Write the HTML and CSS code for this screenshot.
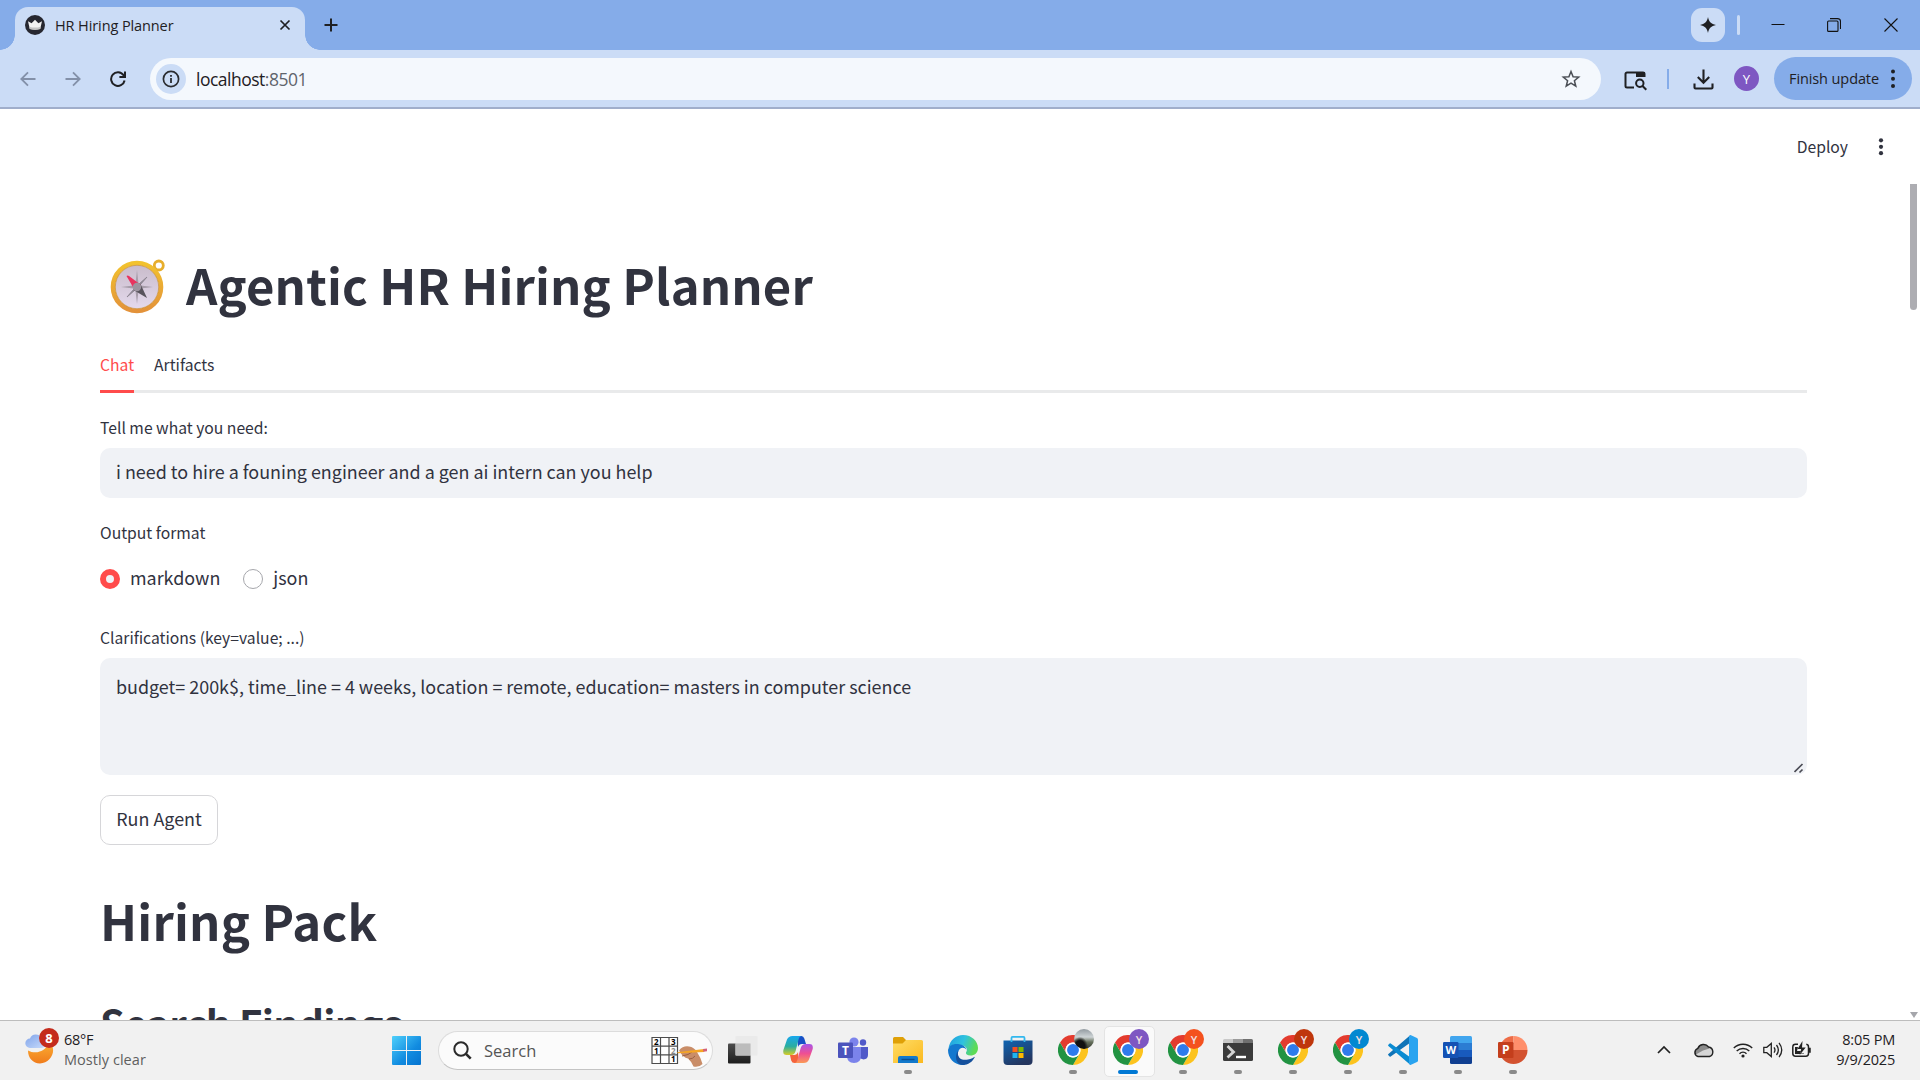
FILE: index.html
```html
<!DOCTYPE html>
<html lang="en">
<head>
<meta charset="utf-8">
<title>HR Hiring Planner</title>
<link rel="stylesheet" href="styles.css">
</head>
<body>
<svg class="defs" width="0" height="0">
  <defs>
    <symbol id="chrome" viewBox="0 0 48 48">
      <circle cx="24" cy="24" r="24" fill="#fff"/>
      <path fill="#e33b2e" d="M3.2 12A24 24 0 0 1 44.8 12H24A12 12 0 0 0 13.6 30Z"/>
      <path fill="#fcc31e" d="M44.8 12A24 24 0 0 1 24 48L34.4 30A12 12 0 0 0 24 12Z"/>
      <path fill="#229342" d="M24 48A24 24 0 0 1 3.2 12L13.6 30A12 12 0 0 0 34.4 30Z"/>
      <circle cx="24" cy="24" r="12" fill="#fff"/>
      <circle cx="24" cy="24" r="9.5" fill="#2f7bed"/>
    </symbol>
  </defs>
</svg>

<header class="browser">
  <div class="tabstrip">
    <div class="tab">
      <svg class="favicon" viewBox="0 0 20 20"><circle cx="10" cy="10" r="10" fill="#262730"/><path d="M3 6.200L6.600 8.300 10 4.700l3.400 3.600L17 6.200 15.200 14Q10 15.500 4.800 14Z" fill="#f2f2f2"/><path d="M4.300 11.700Q10 13.500 15.700 11.700L15.200 14Q10 15.500 4.800 14Z" fill="#c4c4c4"/></svg>
      <span class="tab-title">HR Hiring Planner</span>
      <svg class="tab-close" viewBox="0 0 12 12"><path d="M1.500 1.500l9 9M10.500 1.500l-9 9" stroke="#1f2023" stroke-width="1.700"/></svg>
    </div>
    <svg class="new-tab" viewBox="0 0 14 14"><path d="M7 .5v13M.5 7h13" stroke="#1f2023" stroke-width="2"/></svg>
    <div class="window-controls">
      <span class="sparkle"><svg width="16" height="16" viewBox="0 0 16 16"><path d="M8 0C9 4.800 11.200 7 16 8 11.200 9 9 11.200 8 16 7 11.200 4.800 9 0 8 4.800 7 7 4.800 8 0Z" fill="#1f2023"/></svg></span>
      <span class="strip-divider"></span>
      <svg class="win-min" width="14" height="14" viewBox="0 0 14 14"><path d="M.5 7.500h13" stroke="#111"/></svg>
      <svg class="win-max" width="14" height="14" viewBox="0 0 14 14" fill="none" stroke="#111" stroke-width="1.100"><rect x=".6" y="3" width="10.400" height="10.400" rx="1"/><path d="M3 .6h7.500a3 3 0 0 1 3 3v7.400"/></svg>
      <svg class="win-close" width="14" height="14" viewBox="0 0 14 14"><path d="M.5 .5l13 13M13.500 .5l-13 13" stroke="#111" stroke-width="1.100"/></svg>
    </div>
  </div>
  <div class="toolbar">
    <svg class="back" width="16" height="16" viewBox="0 0 16 16" fill="none" stroke="#8390a8" stroke-width="1.800"><path d="M15.500 8H1.500M8 1.300L1.300 8 8 14.700"/></svg>
    <svg class="forward" width="16" height="16" viewBox="0 0 16 16" fill="none" stroke="#8390a8" stroke-width="1.800"><path d="M.5 8h14M8 1.300L14.700 8 8 14.700"/></svg>
    <svg class="reload" width="16" height="16" viewBox="0 0 16 16" fill="none" stroke="#1f2023" stroke-width="2"><path d="M14.600 9.500A6.800 6.800 0 1 1 13.500 4.200L14.700 5.500"/><path d="M15 .5v5.600H9.400"/></svg>
    <div class="omnibox">
      <span class="site-info"><svg width="18" height="18" viewBox="0 0 18 18"><circle cx="9" cy="9" r="7.600" fill="none" stroke="#2a2c30" stroke-width="1.700"/><path d="M9 8v5M9 5v1.700" stroke="#2a2c30" stroke-width="1.800"/></svg></span>
      <span class="url">localhost<span class="port">:8501</span></span>
      <svg class="star" width="20" height="20" viewBox="0 0 20 20" fill="none" stroke="#4b4f56" stroke-width="1.500"><path d="M10 2.500l2.100 5.200 5.600.4-4.300 3.600 1.400 5.500L10 14.200l-4.800 3 1.400-5.500L2.300 8.100l5.600-.4Z"/></svg>
    </div>
    <svg class="lens" width="23" height="21" viewBox="0 0 23 21" fill="none" stroke="#1f2023" stroke-width="2"><path d="M10 17.500H3a1.500 1.500 0 0 1-1.500-1.500V4A1.500 1.500 0 0 1 3 2.500h16A1.500 1.500 0 0 1 20.500 4v3"/><path d="M12 2h9v5h-9z" fill="#1f2023" stroke="none"/><circle cx="15.800" cy="13.200" r="3.700"/><path d="M18.300 15.700l4 4"/></svg>
    <span class="tool-divider"></span>
    <svg class="download" width="21" height="21" viewBox="0 0 21 21" fill="none" stroke="#1f2023" stroke-width="2.100"><path d="M10.500 .5v13M4.800 8l5.700 5.700L16.200 8M1.500 14.500v4q0 1 1 1h16q1 0 1-1v-4"/></svg>
    <span class="profile">Y</span>
    <div class="update">Finish update
      <svg width="6" height="20" viewBox="0 0 6 20" fill="#1f2023"><circle cx="3" cy="2.500" r="2"/><circle cx="3" cy="9.700" r="2"/><circle cx="3" cy="16.900" r="2"/></svg>
    </div>
  </div>
</header>

<main class="page">
  <div class="app-header">
    <span>Deploy</span>
    <svg width="6" height="20" viewBox="0 0 6 20" fill="#31333f"><circle cx="3" cy="3.300" r="2.100"/><circle cx="3" cy="9.800" r="2.100"/><circle cx="3" cy="16.200" r="2.100"/></svg>
  </div>
  <section class="content">
    <h1 class="title">
      <svg class="compass" width="56" height="56" viewBox="0 0 56 56">
        <defs>
          <linearGradient id="gold" x1="0" y1="0" x2="0" y2="1"><stop offset="0" stop-color="#f2c22e"/><stop offset="1" stop-color="#e3923a"/></linearGradient>
          <linearGradient id="dial" x1="0" y1="0" x2="0" y2="1"><stop offset="0" stop-color="#c9bccb"/><stop offset="1" stop-color="#e4d9ec"/></linearGradient>
        </defs>
        <circle cx="48.800" cy="6.500" r="4.500" fill="none" stroke="#e7ae2c" stroke-width="2.800"/>
        <circle cx="27" cy="28" r="24" fill="none" stroke="url(#gold)" stroke-width="4.600"/>
        <circle cx="27" cy="28" r="21.700" fill="url(#dial)" stroke="#c78a2d" stroke-width=".7"/>
        <path d="M27 11l1.700 15.300L43 28l-14.300 1.700L27 45l-1.700-15.300L11 28l14.300-1.700Z" fill="#a79daa"/>
        <path d="M37 18l-8 7 1 1ZM17 38l8-7-1-1Z" fill="#8f8894" stroke="#8f8894"/>
        <path d="M16.500 17Q17.500 16 19 17L31 26 25 31.500Z" fill="#e8345f"/>
        <path d="M37 39L23.500 31 30.500 25Z" fill="#58535c"/>
        <circle cx="27" cy="28" r="4.200" fill="#9c949f"/>
      </svg>
      <span>Agentic HR Hiring Planner</span>
    </h1>
    <nav class="tabs"><span class="active">Chat</span><span>Artifacts</span></nav>
    <label class="label first">Tell me what you need:</label>
    <div class="input">i need to hire a founing engineer and a gen ai intern can you help</div>
    <label class="label format">Output format</label>
    <div class="radios">
      <span class="radio on"></span><span class="option">markdown</span>
      <span class="radio"></span><span class="option">json</span>
    </div>
    <label class="label clar">Clarifications (key=value; ...)</label>
    <div class="textarea">
      <span>budget= 200k$, time_line = 4 weeks, location = remote, education= masters in computer science</span>
      <svg width="11" height="11" viewBox="0 0 11 11" stroke="#4b4c55" stroke-width="1.700"><path d="M.5 9L8.500 1M5.500 9.500l3-3"/></svg>
    </div>
    <button class="run">Run Agent</button>
    <h1 class="pack">Hiring Pack</h1>
    <h2 class="findings">Search Findings</h2>
  </section>
  <div class="scrollbar"><span class="thumb"></span><span class="down"></span></div>
</main>

<footer class="taskbar">
  <div class="weather">
    <div class="weather-icon">
      <svg width="32" height="36" viewBox="0 0 32 36">
        <defs><linearGradient id="moon" x1="0" y1="0" x2="0" y2="1"><stop offset="0" stop-color="#fbb034"/><stop offset="1" stop-color="#f07c1c"/></linearGradient>
        <linearGradient id="cloud" x1="0" y1="0" x2="1" y2="1"><stop offset="0" stop-color="#7fa3ea"/><stop offset="1" stop-color="#c9dcfb"/></linearGradient></defs>
        <path d="M3 20.500C11 25 22 21 24 11.500c9 8 2 22-9 22C8 33.500 3 28 3 20.500Z" fill="url(#moon)"/>
        <path d="M5 18a4.700 4.700 0 0 1 0-9.400 6.300 6.300 0 0 1 11.500-.5 5 5 0 0 1 0 9.900Z" fill="url(#cloud)"/>
      </svg>
      <b class="count">8</b>
    </div>
    <div class="weather-text"><span>68°F</span><span class="muted">Mostly clear</span></div>
  </div>

  <div class="start">
    <svg width="29" height="29" viewBox="0 0 29 29"><defs><linearGradient id="win" x1="0" y1="0" x2="1" y2="1"><stop offset="0" stop-color="#4fd0fb"/><stop offset=".6" stop-color="#118be0"/><stop offset="1" stop-color="#0673cf"/></linearGradient></defs><path d="M1 0h13v14H0V1q0-1 1-1ZM15 0h13q1 0 1 1v13H15ZM0 15h14v14H1q-1 0-1-1ZM15 15h14v13q0 1-1 1H15Z" fill="url(#win)"/></svg>
  </div>
  <div class="search">
    <svg width="19" height="19" viewBox="0 0 19 19" fill="none" stroke="#2a2a2a"><circle cx="8" cy="8" r="6.700" stroke-width="2"/><path d="M12.700 12.700l5 5" stroke-width="2.600"/></svg>
    <span class="search-text">Search</span>
    <svg class="sudoku" width="58" height="32" viewBox="0 0 58 32">
      <path d="M1 2.500h25.500v26H1ZM9.500 2.500v26M18 2.500v26M1 11.200h25.500M1 19.800h25.500" fill="#fff" stroke="#4c4c4c" stroke-width="1.200"/>
      <g class="digits"><text x="3" y="9.700">2</text><text x="20" y="9.700">3</text><text x="3" y="18.500">1</text><text x="20" y="18.500" fill="#888">2</text><text x="20" y="27">1</text></g>
      <path d="M28 15.500Q32 10.500 38 11.500q5 .5 8 5.500 4 6 5.500 12-3 3.500-9 2.500-2-5-5.500-8-5-1-9-8Z" fill="#c98d68"/>
      <path d="M31 21q7-1 10-4M38 24q4 0 6-3" stroke="#9b6041" stroke-width="1" fill="none"/>
      <path d="M26 17.200l27-3.200.3 3L27 18.200Z" fill="#f6a623"/><path d="M52 14.100l4-.5v2.700l-3.700.4Z" fill="#d2617c"/>
    </svg>
  </div>

  <div class="apps">
    <div class="app"><svg width="30" height="30" viewBox="0 0 30 30"><defs><linearGradient id="tv" x1="0" y1="0" x2="0" y2="1"><stop offset="0" stop-color="#4d4d4d"/><stop offset="1" stop-color="#1d1d1d"/></linearGradient></defs><rect y="8.500" width="22.500" height="20" rx="1" fill="url(#tv)"/><rect x="7.500" y="1" width="22" height="19.500" rx="1" fill="#e9e9e9" fill-opacity=".93"/><rect x="7.500" y="8.500" width="15" height="12" fill="#bcbcbc"/></svg></div>
    <div class="app"><svg width="30" height="30" viewBox="0 0 30 30">
      <defs><linearGradient id="cpA" x1="0" y1="0" x2="0" y2="1"><stop offset="0" stop-color="#17a7ee"/><stop offset=".55" stop-color="#2aaea0"/><stop offset="1" stop-color="#d9cc25"/></linearGradient>
      <linearGradient id="cpB" x1="0" y1="0" x2="0" y2="1"><stop offset="0" stop-color="#a955e8"/><stop offset=".5" stop-color="#ef4f93"/><stop offset="1" stop-color="#fb9a55"/></linearGradient></defs>
      <path d="M14 1h4.500q2 0 2.800 2.500L23 9h-4q-3 0-4 3Z" fill="#1750c6"/>
      <path d="M16 28h-4.500q-2.500 0-3.300-2.500L7 20h4q3 0 4-3Z" fill="#f4633c"/>
      <path d="M9.500 1h9q-2 0-2.700 2.500L12.600 16q-1 4-4.600 4H3.500Q-.5 20 .4 15L4 4.500Q5.500 1 9.500 1Z" fill="url(#cpA)"/>
      <path d="M20.500 28h-9q2 0 2.700-2.500L17.400 14q1-4.500 4.600-5h4.500q4 0 3.200 5L26 24.500Q24.500 28 20.500 28Z" fill="url(#cpB)"/></svg></div>
    <div class="app"><svg width="30" height="30" viewBox="0 0 30 30"><circle cx="16" cy="7" r="4.600" fill="#7b83eb"/><circle cx="25" cy="7.500" r="3.200" fill="#5059c9"/><path d="M21 12h9v8q0 4-4.500 4.500L21 23Z" fill="#5059c9"/><path d="M9 12h14v9q0 7-7 7T9 21Z" fill="#7b83eb"/><rect x="0" y="7.500" width="15" height="15.500" rx="1" fill="#4b53bc"/><text class="glyph" x="7.500" y="19.500" fill="#fff" font-size="12">T</text></svg></div>
    <div class="app"><svg width="30" height="30" viewBox="0 0 30 30"><defs><linearGradient id="fold" x1="0" y1="0" x2="1" y2="1"><stop offset="0" stop-color="#ffdd66"/><stop offset="1" stop-color="#fbb91f"/></linearGradient></defs><path d="M0 3.500Q0 2 1.500 2H10l3 3h15v6H0Z" fill="#dfa007"/><path d="M0 8.500h9.500L13 5h15.500Q30 5 30 6.500V28H0Z" fill="url(#fold)"/><path d="M5 28v-5q0-2 2-2h16q2 0 2 2v5Z" fill="#1279cc"/><path d="M8.500 24.500h13" stroke="#0b4f91" stroke-width="1.400"/></svg><i></i></div>
    <div class="app"><svg width="30" height="30" viewBox="0 0 30 30"><defs><linearGradient id="ed" x1="0" y1="0" x2="1" y2=".3"><stop offset="0" stop-color="#1f9de0"/><stop offset=".55" stop-color="#2fc2df"/><stop offset="1" stop-color="#5ddb56"/></linearGradient></defs><path d="M.5 13C2 5 8 0 15 0c9 0 15 6.500 15 13 0 5-3.500 7.500-7.500 7.500-3.500 0-5-1.500-4.500-3 2.500-4-.5-6.500-5-7.500C8 9 2.500 10 .5 13Z" fill="url(#ed)"/><path d="M0 15C1 10.500 5 8.500 10 9c5 .5 8 3 8.500 6-2-3.500-7-3-8.500 2-1 5 3 9.500 7.500 13-9 1-17.500-5-17.500-15Z" fill="#1378cf"/><path d="M10.500 15.500C8 22 13 26 20 24.500c3-.5 6-2.300 7-2.800C24 28 18 31 12 29.500 7 27 7 19 10.500 15.500Z" fill="#15509c"/></svg></div>
    <div class="app"><svg width="30" height="30" viewBox="0 0 30 30"><defs><linearGradient id="st" x1="0" y1="0" x2=".5" y2="1"><stop offset="0" stop-color="#0f64b2"/><stop offset="1" stop-color="#24365f"/></linearGradient></defs><path d="M.5 5.500h29V26q0 4-4 4h-21q-4 0-4-4Z" fill="url(#st)"/><path d="M8.500 7V2.900q0-1 1-1h11q1 0 1 1V7" fill="none" stroke="#32b8ee" stroke-width="1.800"/><path d="M9.500 12h5v5h-5z" fill="#f25022"/><path d="M15.500 12h5v5h-5z" fill="#7fba00"/><path d="M9.500 18h5v5h-5z" fill="#1eb4f0"/><path d="M15.500 18h5v5h-5z" fill="#ffb900"/></svg></div>
    <div class="app"><svg width="30" height="30"><use href="#chrome"/></svg><b class="user photo"></b><i></i></div>
    <div class="app current"><svg width="30" height="30"><use href="#chrome"/></svg><b class="user purple">Y</b><i></i></div>
    <div class="app"><svg width="30" height="30"><use href="#chrome"/></svg><b class="user orange">Y</b><i></i></div>
    <div class="app"><svg width="30" height="30" viewBox="0 0 30 30"><path d="M0 8h30v16.500q0 1.500-1.500 1.500h-27Q0 26 0 24.500Z" fill="#3b3b3b"/><path d="M0 5.500Q0 4 1.500 4H10v4H0Z" fill="#c9c9c9"/><path d="M10 4h10v4H10Z" fill="#9b9b9b"/><path d="M20 4h8.500Q30 4 30 5.500V8H20Z" fill="#707070"/><path d="M4.500 11l6 6-6 5.500" stroke="#d5d5d5" stroke-width="2.800" fill="none"/><path d="M13 22h10" stroke="#fff" stroke-width="2.400"/></svg><i></i></div>
    <div class="app"><svg width="30" height="30"><use href="#chrome"/></svg><b class="user rust">Y</b><i></i></div>
    <div class="app"><svg width="30" height="30"><use href="#chrome"/></svg><b class="user blue">Y</b><i></i></div>
    <div class="app"><svg width="30" height="30" viewBox="0 0 30 30"><path d="M2.700 21.500L22.500 7.500V0L.4 19q-.7.700 0 1.300l1.200 1.100q.5.500 1.100.1Z" fill="#0f74b8"/><path d="M2.700 8.500L22.500 22.500V30L.4 11q-.7-.7 0-1.300l1.200-1.100q.5-.5 1.100-.1Z" fill="#0a8bd2"/><path d="M22.500 0L29 3q1 .5 1 1.500v21q0 1-1 1.500l-6.500 3q-1.500-.5-1.500-2V2q0-1.500 1.500-2Z" fill="#2aa4f0"/></svg><i></i></div>
    <div class="app"><svg width="30" height="30" viewBox="0 0 30 30"><path d="M7 2.500Q7 1 8.500 1h19Q29 1 29 2.500V8H7Z" fill="#41a5ee"/><path d="M7 8h22v7H7Z" fill="#2b7cd3"/><path d="M7 15h22v7H7Z" fill="#185abd"/><path d="M7 22h22v5.500q0 1.500-1.500 1.500h-19Q7 29 7 27.500Z" fill="#103f91"/><rect y="7" width="15.500" height="16" rx="1.200" fill="#1452b4"/><text class="glyph" x="7.700" y="19" fill="#fff" font-size="11">W</text></svg><i></i></div>
    <div class="app"><svg width="30" height="30" viewBox="0 0 30 30"><path d="M15.500 1A14 14 0 0 0 1.500 15h14Z" fill="#ed6c47"/><path d="M15.500 1a14 14 0 0 1 14 14h-14Z" fill="#ff8f6b"/><path d="M1.500 15a14 14 0 0 0 28 0Z" fill="#d35230"/><rect y="7" width="15.500" height="16" rx="1.200" fill="#c43e1c"/><text class="glyph" x="7.700" y="19" fill="#fff" font-size="12">P</text></svg><i></i></div>
  </div>

  <div class="tray">
    <svg width="14" height="9" viewBox="0 0 14 9" fill="none" stroke="#222" stroke-width="1.700"><path d="M1 8l6-6 6 6"/></svg>
    <svg class="onedrive" width="21" height="16" viewBox="0 0 21 16"><path d="M5 14.500a4.300 4.300 0 0 1 0-8.200A6 6 0 0 1 15.500 5a4.900 4.900 0 0 1 1 9.500Z" fill="#d5d5d5"/><path d="M4 7a6 6 0 0 1 11-2l1.500 1.500L10 8.500 2 13Q0 9 4 7Z" fill="#8b8b8b"/><path d="M5 14.500a4.300 4.300 0 0 1 0-8.200A6 6 0 0 1 15.500 5a4.900 4.900 0 0 1 1 9.500Z" fill="none" stroke="#222" stroke-width="1.400"/></svg>
    <svg class="wifi" width="20" height="16" viewBox="0 0 20 16" fill="none" stroke="#222" stroke-width="1.400"><path d="M.8 6a13 13 0 0 1 18.400 0M3.700 9a9 9 0 0 1 12.600 0M6.500 11.700a5 5 0 0 1 7 0"/><circle cx="10" cy="14" r="1.600" fill="#222" stroke="none"/></svg>
    <svg class="sound" width="20" height="18" viewBox="0 0 20 18" fill="none" stroke="#222" stroke-width="1.300"><path d="M.8 6.300h3L8.300 2.500v13L3.800 11.700h-3ZM11 6.300q2 2.700 0 5.400M13.500 4q3.700 5 0 10M16 1.800q5.500 7.200 0 14.400"/></svg>
    <svg class="battery" width="20" height="17" viewBox="0 0 20 17"><path d="M6 3.200H3.500A2.700 2.700 0 0 0 .8 5.900v6.700a2.700 2.700 0 0 0 2.700 2.700h10.300a2.700 2.700 0 0 0 2.700-2.700V5.900a2.700 2.700 0 0 0-2.200-2.600M18 6.800v5" fill="none" stroke="#222" stroke-width="1.500"/><path d="M3 6h3l-1 4h4l-1 2.500h4V13H3Z" fill="#222"/><path d="M10.500 0L5.500 8h3.700l-1.500 6 6-7.500H10Z" fill="#222"/></svg>
    <div class="clock"><span>8:05 PM</span><span>9/9/2025</span></div>
  </div>
</footer>
</body>
</html>
```
FILE: styles.css
```css
* { box-sizing: border-box; }
body {
  margin: 0;
  width: 1920px;
  height: 1080px;
  overflow: hidden;
  display: flex;
  flex-direction: column;
  background: #fff;
  font-family: "Open Sans", "Noto Sans", sans-serif;
  color: #1f2023;
}
svg { display: block; flex: none; }
.defs { position: absolute; }

/* Browser chrome */
.browser { flex: none; height: 109px; background: #cbdcf6; border-bottom: 2px solid #a0aecb; }
.tabstrip { display: flex; height: 50px; background: #85ace9; }
.tab {
  position: relative;
  display: flex;
  align-items: center;
  width: 290px;
  height: 43px;
  margin: 7px 0 0 15px;
  padding: 0 14px 7px 10px;
  border-radius: 13px 13px 0 0;
  background: #cbdcf6;
}
.tab::before, .tab::after {
  content: "";
  position: absolute;
  bottom: 0;
  width: 15px;
  height: 15px;
}
.tab::before { left: -15px; background: radial-gradient(circle at 0 0, transparent 14.500px, #cbdcf6 15px); }
.tab::after { right: -15px; background: radial-gradient(circle at 100% 0, transparent 14.500px, #cbdcf6 15px); }
.favicon { width: 20px; height: 20px; }
.tab-title { margin-left: 10px; font-size: 14.500px; letter-spacing: -.1px; }
.tab-close { width: 12px; height: 12px; margin-left: auto; }
.new-tab { width: 14px; height: 14px; margin: 18px 0 0 19px; }
.window-controls { display: flex; align-items: center; margin-left: auto; padding-right: 22px; }
.sparkle { display: grid; place-items: center; width: 34px; height: 34px; border-radius: 11px; background: #cbdcf6; }
.strip-divider { width: 3px; height: 20px; margin-left: 12px; border-radius: 2px; background: #cbdcf6; }
.win-min { margin: -2px 0 0 31px; }
.win-max { margin-left: 42px; }
.win-close { margin-left: 43px; }

.toolbar { display: flex; align-items: center; height: 57px; padding-left: 20px; }
.forward { margin-left: 29px; }
.reload { margin-left: 29px; }
.omnibox {
  display: flex;
  align-items: center;
  width: 1451px;
  height: 42px;
  margin-left: 24px;
  padding: 0 20px 0 6px;
  border-radius: 21px;
  background: #f4f8fd;
}
.site-info { display: grid; place-items: center; width: 30px; height: 30px; border-radius: 50%; background: #cbdcf6; }
.url { margin-left: 10px; font-size: 17.500px; letter-spacing: -.5px; }
.port { color: #5f646c; }
.star { margin-left: auto; }
.lens { margin: 3px 0 0 23px; }
.tool-divider { width: 2px; height: 20px; margin-left: 20px; background: #85ace9; }
.download { margin: 2px 0 0 24px; }
.profile {
  display: grid;
  place-items: center;
  width: 25px;
  height: 25px;
  margin-left: 20px;
  border-radius: 50%;
  background: #7e57c2;
  color: #fff;
  font-size: 13px;
}
.update {
  display: flex;
  align-items: center;
  justify-content: space-between;
  width: 138px;
  height: 43px;
  margin-left: 15px;
  padding: 0 16px 0 15px;
  border-radius: 22px;
  background: #85ace9;
  font-size: 14.500px;
  letter-spacing: -.1px;
  white-space: nowrap;
}

/* Application page */
.page {
  position: relative;
  height: 911px;
  overflow: hidden;
  color: #31333f;
  font-family: "Noto Sans CJK SC", "Noto Sans CJK JP", sans-serif;
}
.app-header {
  display: flex;
  align-items: center;
  justify-content: flex-end;
  gap: 30px;
  height: 75px;
  padding-right: 36px;
  font-size: 15.700px;
}
.content { width: 1707px; margin-left: 100px; }
.title {
  display: flex;
  align-items: center;
  height: 66px;
  margin: 67px 0 0;
  font-size: 49px;
  line-height: 66px;
  font-weight: 700;
  letter-spacing: .14px;
}
.compass { margin: 5px 20px 0 10px; }
.tabs {
  display: flex;
  gap: 20px;
  height: 54px;
  margin-top: 22px;
  font-size: 15.700px;
  line-height: 51px;
  border-bottom: 3px solid #e9eaeb;
}
.tabs span { height: 54px; }
.tabs .active { color: #ff4b4b; border-bottom: 3px solid #ff4b4b; }
.label { display: block; height: 24px; line-height: 24px; font-size: 15.700px; }
.first { margin-top: 23px; }
.input, .textarea { border-radius: 10px; background: #f0f2f6; font-size: 17.920px; }
.input { height: 50px; margin-top: 8px; padding-left: 16px; line-height: 47px; }
.format { margin-top: 23px; }
.radios { display: flex; align-items: center; height: 30px; margin-top: 19px; font-size: 17.920px; }
.radio { width: 20px; height: 20px; border: 1px solid #a6a7ac; border-bottom-width: 1.500px; border-radius: 50%; }
.radio.on { border: 6px solid #ff4b4b; background: #f0f2f6; }
.option { margin: -5px 23px 0 10px; }
.clar { margin-top: 32px; }
.textarea {
  display: flex;
  justify-content: space-between;
  height: 117px;
  margin-top: 8px;
  padding: 13px 2px 1px 16px;
  line-height: 30px;
}
.textarea svg { align-self: flex-end; }
.run {
  display: block;
  width: 118px;
  height: 50px;
  margin-top: 20px;
  padding: 0 0 5px;
  border: 1px solid #d6d6d9;
  border-radius: 10px;
  background: #fff;
  color: inherit;
  font: 17.920px "Noto Sans CJK SC", sans-serif;
}
.pack { margin: 42px 0 0; font-size: 49px; line-height: 66px; letter-spacing: .2px; }
.findings { margin: 40px 0 0; font-size: 40px; line-height: 60px; letter-spacing: -.7px; }
.scrollbar {
  position: absolute;
  top: 75px;
  right: 0;
  bottom: 0;
  display: flex;
  flex-direction: column;
  justify-content: space-between;
  align-items: center;
  width: 13px;
  padding-bottom: 2px;
}
.thumb { width: 7px; height: 126px; border-radius: 0 0 4px 4px; background: #adadb2; }
.down { border: 4px solid transparent; border-top: 6px solid #a5a6ab; border-bottom: 0; }

/* Taskbar */
.taskbar { display: flex; align-items: center; height: 60px; border-top: 1px solid #bdbdbd; background: #f1f1f1; }
.weather { display: flex; width: 392px; padding: 0 0 2px 25px; }
.weather-icon { position: relative; }
.count {
  position: absolute;
  left: 14px;
  top: -2px;
  display: grid;
  place-items: center;
  width: 20px;
  height: 20px;
  border-radius: 50%;
  background: #c42b1c;
  color: #fff;
  font-size: 13px;
}
.weather-text { display: flex; flex-direction: column; margin-left: 7px; font-size: 14.500px; line-height: 20px; letter-spacing: -.3px; }
.muted { color: #5f5f5f; letter-spacing: .05px; }
.search {
  display: flex;
  align-items: center;
  width: 275px;
  height: 39px;
  margin-left: 17px;
  padding: 0 3px 0 14px;
  border: 1px solid #dcdcdc;
  border-bottom-color: #c4c4c4;
  border-radius: 20px;
  background: #fbfbfb;
}
.search-text { margin-left: 12px; color: #555; font-size: 16.500px; }
.sudoku { margin-left: auto; }
.digits { font: 700 8px "Open Sans", sans-serif; }
.glyph { font-family: "Open Sans", sans-serif; font-weight: 700; text-anchor: middle; }
.apps { display: flex; margin-left: 2px; }
.app { position: relative; display: grid; place-items: center; width: 55px; height: 49px; padding-bottom: 1px; }
.app i {
  position: absolute;
  left: 24px;
  bottom: 1px;
  width: 8px;
  height: 4px;
  border-radius: 2px;
  background: #8a8a8a;
}
.current::before {
  content: "";
  position: absolute;
  left: 4px;
  top: 0;
  width: 49px;
  height: 49px;
  border: 1px solid #e4e4e4;
  border-radius: 5px;
  background: #fafafa;
}
.current svg { position: relative; }
.current i { left: 18px; width: 20px; background: #0078d4; }
.user {
  position: absolute;
  left: 29px;
  top: 3px;
  display: grid;
  place-items: center;
  width: 20px;
  height: 20px;
  border-radius: 50%;
  color: #f1dfe0;
  font-size: 11px;
  font-weight: 600;
}
.purple { background: #7e57c2; }
.orange { background: #f4511e; }
.rust { background: #bf360c; }
.blue { background: #0288d1; }
.photo { background: radial-gradient(ellipse at 30% 90%, #111 25%, transparent 40%), linear-gradient(#929aa0, #ced4d6 40%, #66705c 65%, #30342d); }
.tray { display: flex; align-items: center; margin-left: auto; padding: 0 25px 2px 0; }
.onedrive { margin-left: 22px; }
.wifi { margin-left: 19px; }
.sound { margin-left: 10px; }
.battery { margin-left: 9px; }
.clock { display: flex; flex-direction: column; width: 83px; text-align: right; font-size: 14.500px; line-height: 20px; letter-spacing: -.2px; }
```
